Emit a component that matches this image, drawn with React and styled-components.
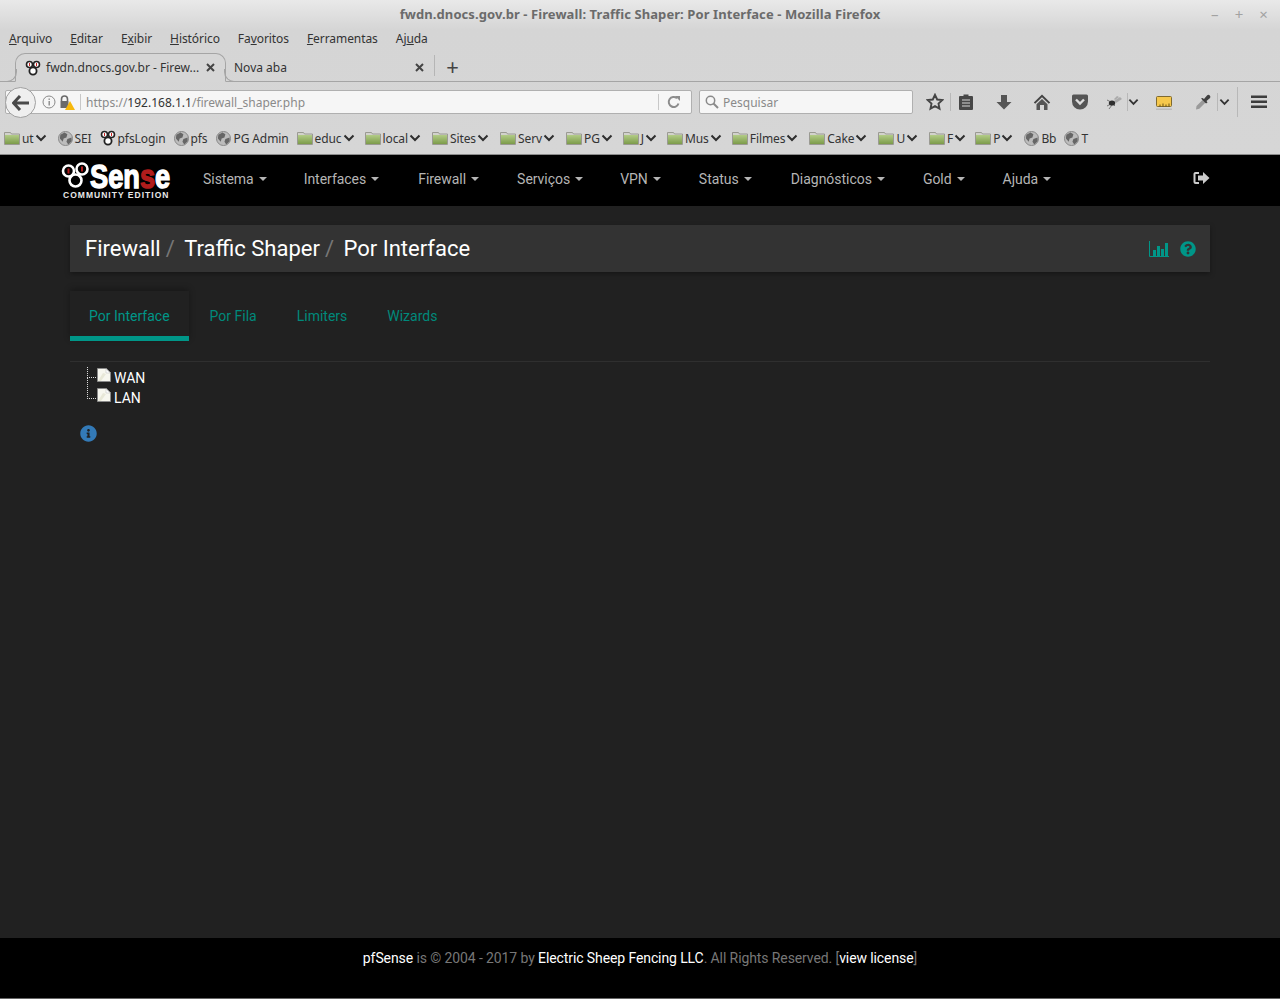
import React from 'react'
import styled, { createGlobalStyle } from 'styled-components'
import { FaInfoCircle, FaQuestionCircle } from 'react-icons/fa'

const Global = createGlobalStyle`
  html, body { margin: 0; padding: 0; background: #212121; }
  * { box-sizing: border-box; }
`

const Page = styled.div`
  width: 1280px;
  height: 999px;
  display: flex;
  flex-direction: column;
  overflow: hidden;
  background: #212121;
`

/* browser chrome */
const Chrome = styled.div`
  height: 155px;
  flex: none;
  background: linear-gradient(#e9e9e9 0, #d5d5d5 30px, #d6d6d6 100%);
  border-bottom: 1px solid #8b8b8b;
  font-family: "Noto Sans", "Open Sans", sans-serif;
  font-size: 12px;
  color: #3a3a3a;
`
const TitleBar = styled.div`
  height: 28px;
  position: relative;
  display: flex;
  align-items: center;
  justify-content: center;
  font-size: 13px;
  font-weight: 700;
  letter-spacing: 0.08px;
  color: #6b6b6b;
`
const WinButtons = styled.div`
  position: absolute;
  right: 12px;
  top: 5px;
  display: flex;
  gap: 16px;
  font-size: 15px;
  line-height: 18px;
  font-weight: 400;
  color: #a2a2a2;
`
const MenuBar = styled.div`
  height: 20px;
  margin-bottom: 4px;
  display: flex;
  align-items: center;
  padding-left: 9px;
  gap: 18px;
  letter-spacing: -0.07px;
  color: #333;
`
const Tabs = styled.div`
  height: 30px;
  display: flex;
  align-items: stretch;
  padding-left: 15px;
  border-bottom: 1px solid #a5a5a5;
`
const TabBox = styled.div`
  position: relative;
  width: ${p => p.$w}px;
  display: flex;
  align-items: center;
  padding-left: ${p => p.$pad}px;
  gap: 5px;
  white-space: nowrap;
  color: #333;
  ${p => p.$active ? `
    background: #d6d6d6;
    border: 1px solid #a5a5a5;
    border-bottom: 1px solid #d6d6d6;
    border-radius: 10px 10px 0 0;
    height: 29px;
    margin-top: 1px;
    &::before, &::after {
      content: "";
      position: absolute;
      bottom: -1px;
      width: 12px;
      height: 12px;
      border-bottom: 1px solid #a5a5a5;
    }
    &::before {
      left: -12px;
      border-right: 1px solid #a5a5a5;
      border-bottom-right-radius: 10px;
    }
    &::after {
      right: -12px;
      border-left: 1px solid #a5a5a5;
      border-bottom-left-radius: 10px;
    }
  ` : `
    padding-top: 1px;
  `}
`
const Close = styled.svg`
  margin-left: auto;
  margin-right: 10px;
  flex: none;
`
const PlusTab = styled.div`
  width: 36px;
  display: flex;
  align-items: center;
  justify-content: center;
  font-size: 22px;
  font-weight: 400;
  color: #444;
  border-left: 1px solid #b5b5b5;
  margin: 3px 0 5px;
`
const NavBar = styled.div`
  height: 40px;
  position: relative;
  display: flex;
  align-items: center;
  padding-left: 5px;
`
const BackBtn = styled.div`
  position: absolute;
  left: 5px;
  top: 5px;
  width: 31px;
  height: 31px;
  border-radius: 50%;
  background: #efefef;
  border: 1px solid #a0a0a0;
  display: flex;
  align-items: center;
  justify-content: center;
  z-index: 1;
`
const UrlBar = styled.div`
  width: 687px;
  height: 24px;
  background: #f6f6f6;
  border: 1px solid #b0b0b0;
  border-radius: 2px;
  display: flex;
  align-items: center;
  padding: 0 10px 0 36px;
  color: #8a8a8a;
  b { font-weight: 400; color: #333; }
`
const UrlSep = styled.span`
  width: 1px;
  height: 16px;
  background: #c8c8c8;
  margin: ${p => p.$m};
`
const SearchBox = styled.div`
  width: 214px;
  height: 24px;
  margin-left: 7px;
  background: #f6f6f6;
  border: 1px solid #b0b0b0;
  border-radius: 2px;
  display: flex;
  align-items: center;
  gap: 4px;
  padding-left: 5px;
  color: #8a8a8a;
`
const Tools = styled.div`
  height: 100%;
  display: flex;
  align-items: center;
`
const ToolIcon = styled.svg`
  flex: none;
  margin-left: ${p => p.$ml}px;
`
const ToolLine = styled.span`
  flex: none;
  margin-left: ${p => p.$ml}px;
  height: ${p => p.$tall ? 30 : 18}px;
  width: 1px;
  background: #b8b8b8;
`
const Bookmarks = styled.div`
  height: 32px;
  display: flex;
  align-items: center;
  padding-left: 4px;
  font-size: 12px;
  color: #333;
`
const Mark = styled.div`
  display: flex;
  align-items: center;
  margin-right: ${p => p.$gap}px;
  white-space: nowrap;
  letter-spacing: -0.1px;
`
const MarkLabel = styled.span`
  margin-left: 2px;
`
const Icon = styled.svg`
  flex: none;
  margin-left: ${p => p.$ml || 0}px;
`

/* pfSense nav */
const Navbar = styled.div`
  height: 51px;
  flex: none;
  background: #000;
  display: flex;
  align-items: center;
  padding: 0 70px 4px 60px;
  font-family: Roboto, sans-serif;
  font-size: 14px;
  letter-spacing: -0.03px;
  color: #b5b5b5;
`
const Logo = styled.div`
  width: 112px;
  flex: none;
  align-self: flex-start;
  margin: 7px 31px 0 0;
  display: flex;
  flex-direction: column;
  font-family: "Liberation Sans", sans-serif;
  font-weight: 700;
  letter-spacing: 0;
`
const LogoTop = styled.div`
  height: 28px;
  display: flex;
  align-items: flex-start;
`
const LogoMark = styled.svg`
  flex: none;
  margin-top: -2px;
`
const LogoWord = styled.span`
  font-size: 34px;
  line-height: 28px;
  color: #fff;
  -webkit-text-stroke: 1.4px #fff;
  transform: scaleX(0.8);
  transform-origin: left;
  i { font-style: normal; color: #b01c1c; -webkit-text-stroke: 1.4px #b01c1c; }
`
const LogoSub = styled.span`
  margin-left: 3px;
  white-space: nowrap;
  font-size: 8.5px;
  line-height: 10px;
  letter-spacing: 1.02px;
  color: #e8e8e8;
`
const NavItem = styled.div`
  display: flex;
  align-items: center;
  margin-right: ${p => p.$mr}px;
  white-space: nowrap;
  &::after {
    content: "";
    margin-left: 5px;
    border-top: 4px solid #b5b5b5;
    border-left: 4px solid transparent;
    border-right: 4px solid transparent;
  }
`
const Logout = styled.svg`
  margin-left: auto;
`

/* content */
const Main = styled.div`
  flex: 1;
  padding: 19px 70px 0;
  font-family: Roboto, sans-serif;
`
const Crumbs = styled.div`
  height: 47px;
  background: #333;
  box-shadow: 0 2px 5px rgba(0, 0, 0, 0.35);
  display: flex;
  align-items: center;
  justify-content: space-between;
  padding: 0 14px 0 15px;
  font-size: 22px;
  color: #fff;
`
const Trail = styled.div`
  display: flex;
  align-items: center;
`
const Slash = styled.span`
  color: #777;
  margin: 0 9.5px 0 5px;
`
const Actions = styled.div`
  display: flex;
  align-items: center;
  gap: 11px;
  color: #009688;
`
const TabRow = styled.div`
  display: flex;
  margin-top: 19px;
  height: 50px;
`
const PageTab = styled.div`
  padding: 17px 19px 0;
  font-size: 14px;
  color: ${p => p.$active ? '#009688' : '#00897b'};
  margin-right: 2px;
  ${p => p.$active && `
    border-bottom: 5px solid #009688;
    box-shadow: 0 -2px 6px rgba(0, 0, 0, 0.3);
  `}
`
const Rule = styled.div`
  height: 1px;
  background: #2f2f2f;
  margin-top: 20px;
`
const Tree = styled.div`
  margin: 5px 0 0 17px;
`
const TreeRow = styled.div`
  height: 20px;
  display: flex;
  align-items: flex-start;
  color: #fff;
  font-size: 14px;
  line-height: 22px;
  gap: 3px;
`
const Branch = styled.span`
  width: 9px;
  height: ${p => p.$h}px;
  margin-top: ${p => p.$t}px;
  border-left: 1px dotted #ddd;
  border-bottom: 1px dotted #ddd;
  flex: none;
`
const DocIcon = styled.svg`
  margin: 1px 0 0 -2px;
  flex: none;
`
const Info = styled.div`
  margin: 18px 0 0 10px;
  display: flex;
  color: #337ab7;
`
const Footer = styled.div`
  height: 61px;
  flex: none;
  background: #000;
  border-bottom: 1px solid #666;
  display: flex;
  justify-content: center;
  padding-top: 11px;
  font-family: Roboto, sans-serif;
  font-size: 14px;
  line-height: 18px;
  letter-spacing: -0.1px;
  color: #777;
  b { font-weight: 400; color: #fff; }
`

const Pf = () => (
  <Icon width="16" height="16" viewBox="0 0 16 16">
    <circle cx="4.5" cy="4.5" r="3" fill="#fff" stroke="#222" strokeWidth="1.6" />
    <circle cx="11.5" cy="4.5" r="3" fill="#fff" stroke="#222" strokeWidth="1.6" />
    <circle cx="8" cy="11" r="3.6" fill="#fff" stroke="#222" strokeWidth="1.8" />
    <rect x="4" y="3" width="1" height="3" fill="#c22" />
    <rect x="11" y="3" width="1" height="3" fill="#c22" />
  </Icon>
)
const Folder = () => (
  <Icon width="16" height="16" viewBox="0 0 16 16">
    <defs>
      <linearGradient id="folderBody" x1="0" y1="0" x2="0" y2="1">
        <stop offset="0" stopColor="#b2cc86" />
        <stop offset="1" stopColor="#7c9b4a" />
      </linearGradient>
    </defs>
    <path d="M0.5 2.5h6l1 1.5h8v10.5h-15z" fill="#d2d2cc" stroke="#9a9a92" />
    <rect x="1" y="5" width="14" height="9" fill="url(#folderBody)" />
  </Icon>
)
const Globe = () => (
  <Icon width="15" height="15" viewBox="0 0 16 16">
    <circle cx="8" cy="8" r="7.5" fill="#bcbcbc" stroke="#858585" />
    <path d="M2.5 4l4.5-2.5 3 2-1 3.5-3 1-1 3.5-3-3.5zM10 8.5l4.5-1.5 0 4-3.5 3.5-2-3z" fill="#666" />
  </Icon>
)
const Chevron = () => (
  <Icon $ml={1} width="12" height="8" viewBox="0 0 12 8">
    <path d="M1.5 1.5L6 6l4.5-4.5" fill="none" stroke="#2e2e2e" strokeWidth="2" />
  </Icon>
)
const X = () => (
  <Close width="9" height="9" viewBox="0 0 9 9">
    <path d="M1 1l7 7M8 1L1 8" stroke="#444" strokeWidth="2" />
  </Close>
)
const Doc = () => (
  <DocIcon width="14" height="14" viewBox="0 0 14 14">
    <path d="M0.5 0.5h9l4 4v9h-13z" fill="#f7f7ef" stroke="#8a8a8a" />
    <path d="M9 1v4h4z" fill="#fff" stroke="#bbb" strokeWidth="0.5" />
    <path d="M1 13L6 5l3 1-5 7z" fill="#e8e8d8" />
  </DocIcon>
)

const marks = [
  ['f', 'ut', true, 11], ['g', 'SEI', false, 8], ['p', 'pfsLogin', false, 8], ['g', 'pfs', false, 9], ['g', 'PG Admin', false, 8],
  ['f', 'educ', true, 10], ['f', 'local', true, 11], ['f', 'Sites', true, 11], ['f', 'Serv', true, 11], ['f', 'PG', true, 10],
  ['f', 'J', true, 10], ['f', 'Mus', true, 10], ['f', 'Filmes', true, 11], ['f', 'Cake', true, 11], ['f', 'U', true, 11],
  ['f', 'F', true, 9], ['f', 'P', true, 11], ['g', 'Bb', false, 8], ['g', 'T', false, 0],
]

const navItems = [['Sistema', 37], ['Interfaces', 39], ['Firewall', 38], ['Serviços', 37], ['VPN', 38], ['Status', 39], ['Diagnósticos', 38], ['Gold', 38], ['Ajuda', 0]]

export default function App() {
  return (
    <Page>
      <Global />
      <Chrome>
        <TitleBar>
          fwdn.dnocs.gov.br - Firewall: Traffic Shaper: Por Interface - Mozilla Firefox
          <WinButtons><span>–</span><span>+</span><span>×</span></WinButtons>
        </TitleBar>
        <MenuBar>
          <span><u>A</u>rquivo</span>
          <span><u>E</u>ditar</span>
          <span>E<u>x</u>ibir</span>
          <span><u>H</u>istórico</span>
          <span>Fa<u>v</u>oritos</span>
          <span><u>F</u>erramentas</span>
          <span>Aj<u>u</u>da</span>
        </MenuBar>
        <Tabs>
          <TabBox $active $w={211} $pad={9}>
            <Pf />
            fwdn.dnocs.gov.br - Firew...
            <X />
          </TabBox>
          <TabBox $w={208} $pad={8}>
            Nova aba
            <X />
          </TabBox>
          <PlusTab>+</PlusTab>
        </Tabs>
        <NavBar>
          <BackBtn>
            <svg width="18" height="16" viewBox="0 0 18 16">
              <path d="M8 1L1.5 8 8 15M2 8h15" fill="none" stroke="#4a4a4a" strokeWidth="3" />
            </svg>
          </BackBtn>
          <UrlBar>
            <Icon width="14" height="14" viewBox="0 0 14 14">
              <circle cx="7" cy="7" r="6" fill="none" stroke="#8a8a8a" />
              <rect x="6.5" y="6" width="1.4" height="4.5" fill="#8a8a8a" />
              <rect x="6.5" y="3.5" width="1.4" height="1.4" fill="#8a8a8a" />
            </Icon>
            <Icon $ml={4} width="15" height="15" viewBox="0 0 15 15">
              <path d="M1.5 6V4a3 3 0 016 0v2" fill="none" stroke="#6a6a6a" strokeWidth="1.6" />
              <rect x="0.5" y="6" width="8" height="7" fill="#6a6a6a" />
              <path d="M10 6l5 9H5z" fill="#f6b80c" />
            </Icon>
            <UrlSep $m="0 5px 0 5px" />
            <span>https://<b>192.168.1.1</b>/firewall_shaper.php</span>
            <UrlSep $m="0 0 0 auto" />
            <Icon $ml={8} width="14" height="14" viewBox="0 0 14 14">
              <path d="M11.5 8.5A5 5 0 1 1 10 3.2" fill="none" stroke="#8c8c8c" strokeWidth="2" />
              <path d="M8 1h5v5z" fill="#8c8c8c" />
            </Icon>
          </UrlBar>
          <SearchBox>
            <Icon width="14" height="14" viewBox="0 0 14 14">
              <circle cx="5.5" cy="5.5" r="4.2" fill="none" stroke="#8a8a8a" strokeWidth="1.5" />
              <path d="M8.5 8.5L13 13" stroke="#8a8a8a" strokeWidth="2" />
            </Icon>
            Pesquisar
          </SearchBox>
          <Tools>
            <ToolIcon $ml={13} width="18" height="18" viewBox="0 0 18 18">
              <path d="M9 1.8l2.2 4.7 5.1.6-3.8 3.5 1 5.1L9 13.2l-4.5 2.5 1-5.1-3.8-3.5 5.1-.6z" fill="none" stroke="#444" strokeWidth="1.9" />
            </ToolIcon>
            <ToolLine $ml={6} />
            <ToolIcon $ml={7} width="16" height="18" viewBox="0 0 16 18">
              <path d="M2 3h3.5V1.5h5V3H14a1 1 0 011 1v12a1 1 0 01-1 1H2a1 1 0 01-1-1V4a1 1 0 011-1z" fill="#474747" />
              <path d="M4 7h8M4 10h8M4 13h8" stroke="#d6d6d6" strokeWidth="1.2" />
            </ToolIcon>
            <ToolIcon $ml={22} width="16" height="18" viewBox="0 0 16 18">
              <path d="M5 2h6v7h4.5L8 16.5.5 9H5z" fill="#555" />
            </ToolIcon>
            <ToolIcon $ml={21} width="18" height="18" viewBox="0 0 18 18">
              <path d="M9 1.5L.8 9.5l1.4 1.2L9 4.2l6.8 6.5 1.4-1.2z" fill="#444" />
              <path d="M9 6l-5.5 5.2V17h3.5v-5h4v5h3.5v-5.8z" fill="#555" />
            </ToolIcon>
            <ToolIcon $ml={20} width="18" height="18" viewBox="0 0 18 18">
              <path d="M2.5 1.5h13A1.5 1.5 0 0117 3v5.5a8 8 0 01-16 0V3a1.5 1.5 0 011.5-1.5z" fill="#555" />
              <path d="M5 6.5L9 10.5l4-4" fill="none" stroke="#ddd" strokeWidth="2.4" />
            </ToolIcon>
            <ToolIcon $ml={16} width="18" height="18" viewBox="0 0 18 18">
              <path d="M9 8l6-4 2 2-6 4zM9 6l3-3 2 1-4 3z" fill="#aaa" />
              <path d="M2 7l4 2M2 13l4-2M4 16l3-4M10 13l-2-2" stroke="#777" strokeWidth="1" />
              <ellipse cx="7" cy="10" rx="3.2" ry="2.6" fill="#2f2f2f" />
            </ToolIcon>
            <ToolLine $ml={4} />
            <ToolIcon $ml={0} width="11" height="8" viewBox="0 0 12 8">
              <path d="M1.5 1.5L6 6l4.5-4.5" fill="none" stroke="#333" strokeWidth="2" />
            </ToolIcon>
            <ToolIcon $ml={16} width="18" height="18" viewBox="0 0 18 18">
              <rect x="1.5" y="3.5" width="15" height="10" rx="1" fill="#f6c84c" stroke="#7f6a30" />
              <path d="M5 13.5v-2M8 13.5v-3M11 13.5v-2M14 13.5v-3" stroke="#6b5313" />
              <rect x="1" y="15.5" width="16" height="1.5" fill="#bcbcbc" />
            </ToolIcon>
            <ToolIcon $ml={21} width="18" height="18" viewBox="0 0 18 18">
              <path d="M2 16.5l.5-3.5 6.5-6.5 2.8 2.8-6.5 6.5z" fill="#9a9a9a" />
              <path d="M8.5 5l1.5 1 3-3.5a1.8 1.8 0 012.8 2.8L12.5 8l1 1.5-1.5 1-5-5z" fill="#404040" />
            </ToolIcon>
            <ToolLine $ml={5} />
            <ToolIcon $ml={1} width="11" height="8" viewBox="0 0 12 8">
              <path d="M1.5 1.5L6 6l4.5-4.5" fill="none" stroke="#333" strokeWidth="2" />
            </ToolIcon>
            <ToolLine $ml={7} $tall />
            <ToolIcon $ml={12} width="18" height="18" viewBox="0 0 18 18">
              <path d="M1 2.5h16V5H1zM1 7.5h16V10H1zM1 12.5h16V15H1z" fill="#3d3d3d" />
            </ToolIcon>
          </Tools>
        </NavBar>
        <Bookmarks>
          {marks.map(([kind, label, chev, gap]) => (
            <Mark key={label + kind} $gap={gap}>
              {kind === 'f' && <Folder />}
              {kind === 'g' && <Globe />}
              {kind === 'p' && <Pf />}
              <MarkLabel>{label}</MarkLabel>
              {chev && <Chevron />}
            </Mark>
          ))}
        </Bookmarks>
      </Chrome>

      <Navbar>
        <Logo>
          <LogoTop>
            <LogoMark width="30" height="30" viewBox="0 0 30 30">
              <circle cx="8.5" cy="11" r="5.5" fill="#000" stroke="#fff" strokeWidth="2.6" />
              <circle cx="22" cy="9" r="5.5" fill="#000" stroke="#fff" strokeWidth="2.6" />
              <circle cx="15.5" cy="20.5" r="6" fill="#000" stroke="#fff" strokeWidth="2.6" />
              <path d="M7.5 8.5h2v5h-2zM21 6.5h2v5h-2z" fill="#b01c1c" />
            </LogoMark>
            <LogoWord>Sen<i>s</i>e</LogoWord>
          </LogoTop>
          <LogoSub>COMMUNITY EDITION</LogoSub>
        </Logo>
        {navItems.map(([label, mr]) => (
          <NavItem key={label} $mr={mr}>{label}</NavItem>
        ))}
        <Logout width="17" height="15" viewBox="0 0 17 15">
          <path d="M6 2H2.5A1 1 0 001.5 3v8a1 1 0 001 1H6" fill="none" stroke="#ccc" strokeWidth="2" />
          <path d="M5 4.5h5V1l6.5 6-6.5 6V9.5H5z" fill="#ccc" />
        </Logout>
      </Navbar>

      <Main>
        <Crumbs>
          <Trail>
            Firewall<Slash>/</Slash>Traffic Shaper<Slash>/</Slash>Por Interface
          </Trail>
          <Actions>
            <svg width="20" height="16" viewBox="0 0 20 16">
              <path d="M0.5 0v15.5H20" fill="none" stroke="currentColor" />
              <path d="M4 9h3v6H4zM8 5h3v10H8zM12 8h3v7h-3zM16 2h3v13h-3z" fill="currentColor" />
            </svg>
            <FaQuestionCircle size={16} />
          </Actions>
        </Crumbs>
        <TabRow>
          <PageTab $active>Por Interface</PageTab>
          <PageTab>Por Fila</PageTab>
          <PageTab>Limiters</PageTab>
          <PageTab>Wizards</PageTab>
        </TabRow>
        <Rule />
        <Tree>
          <TreeRow><Branch $h={11} $t={0} /><Doc />WAN</TreeRow>
          <TreeRow><Branch $h={22} $t={-10} /><Doc />LAN</TreeRow>
        </Tree>
        <Info><FaInfoCircle size={17} /></Info>
      </Main>

      <Footer>
        <span><b>pfSense</b> is © 2004 - 2017 by <b>Electric Sheep Fencing LLC</b>. All Rights Reserved. [<b>view license</b>]</span>
      </Footer>
    </Page>
  )
}
